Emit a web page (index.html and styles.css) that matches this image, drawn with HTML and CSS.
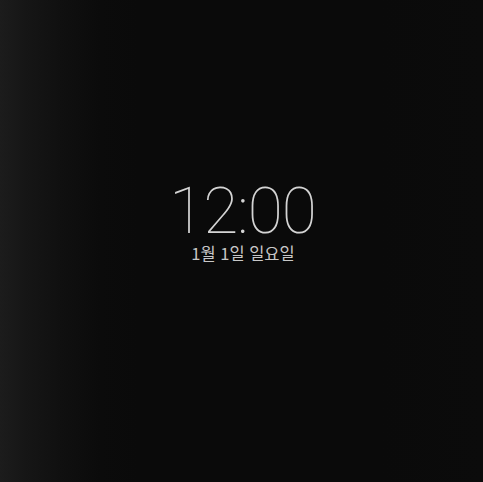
FILE: index.html
```html
<!DOCTYPE html>
<html lang="ko">
<head>
<meta charset="utf-8">
<link rel="stylesheet" href="styles.css">
</head>
<body>
<main class="lock">
  <div class="clock">12:00</div>
  <div class="date">1월 1일 일요일</div>
</main>
</body>
</html>
```
FILE: styles.css
```css
html, body {
  margin: 0;
  padding: 0;
  width: 100%;
  height: 100%;
}
body {
  background: #0a0a0a;
}
.lock {
  width: 483px;
  height: 482px;
  background:
    linear-gradient(90deg, #1c1c1c 0px, #161616 25px, #101010 60px, #0b0b0b 100px, #0a0a0a 140px, #0a0a0a 380px, #0b0b0b 483px);
  display: flex;
  flex-direction: column;
  align-items: center;
  padding-top: 183px;
  box-sizing: border-box;
}
.clock {
  font-family: Roboto, "Liberation Sans", sans-serif;
  font-weight: 100;
  font-size: 64px;
  line-height: 58px;
  color: #d4d4d4;
  letter-spacing: -1px;
  padding-left: 2px;
}
.date {
  font-family: "Noto Sans CJK KR", "Noto Sans", sans-serif;
  font-size: 16.5px;
  line-height: 22px;
  color: #c8c8c8;
  margin-top: 1px;
  padding-left: 3px;
}
```
